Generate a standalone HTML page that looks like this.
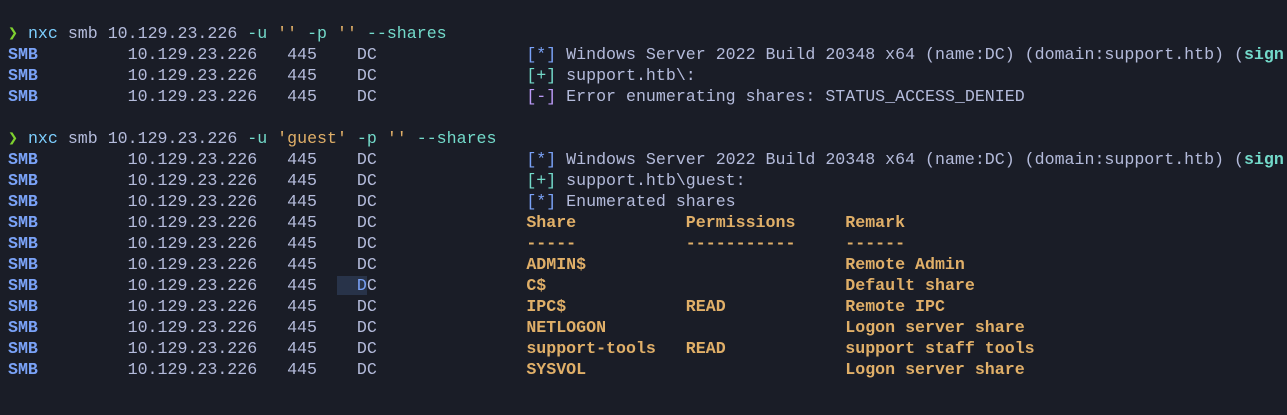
<!DOCTYPE html>
<html><head><meta charset="utf-8"><style>
html,body{margin:0;padding:0;background:#1a1d27;width:1287px;height:415px;overflow:hidden}
pre{position:absolute;left:8px;top:23px;margin:0;font-family:"Liberation Mono","DejaVu Sans Mono",monospace;font-size:16.63px;line-height:21px;color:#b4bbdb;white-space:pre}
.s{color:#7aa2f7;font-weight:bold}
.g{color:#7fd12f;font-weight:bold}
.c{color:#7dcfff}
.f{color:#73daca}
.o{color:#e0af68}
.y{color:#e0af68;font-weight:bold}
.b{color:#7aa2f7}
.t{color:#73daca}
.p{color:#bb9af7}
.tb{color:#73daca;font-weight:bold}
.hl{background:#283349;color:#7aa2f7}
</style></head><body><pre><span class="g">❯</span> <span class="c">nxc</span> smb 10.129.23.226 <span class="f">-u</span> <span class="o">''</span> <span class="f">-p</span> <span class="o">''</span> <span class="f">--shares</span>
<span class="s">SMB</span>         10.129.23.226   445    DC               <span class="b">[*]</span> Windows Server 2022 Build 20348 x64 (name:DC) (domain:support.htb) (<span class="tb">sign</span>
<span class="s">SMB</span>         10.129.23.226   445    DC               <span class="t">[+]</span> support.htb\:
<span class="s">SMB</span>         10.129.23.226   445    DC               <span class="p">[-]</span> Error enumerating shares: STATUS_ACCESS_DENIED

<span class="g">❯</span> <span class="c">nxc</span> smb 10.129.23.226 <span class="f">-u</span> <span class="o">'guest'</span> <span class="f">-p</span> <span class="o">''</span> <span class="f">--shares</span>
<span class="s">SMB</span>         10.129.23.226   445    DC               <span class="b">[*]</span> Windows Server 2022 Build 20348 x64 (name:DC) (domain:support.htb) (<span class="tb">sign</span>
<span class="s">SMB</span>         10.129.23.226   445    DC               <span class="t">[+]</span> support.htb\guest:
<span class="s">SMB</span>         10.129.23.226   445    DC               <span class="b">[*]</span> Enumerated shares
<span class="s">SMB</span>         10.129.23.226   445    DC               <span class="y">Share           Permissions     Remark</span>
<span class="s">SMB</span>         10.129.23.226   445    DC               <span class="y">-----           -----------     ------</span>
<span class="s">SMB</span>         10.129.23.226   445    DC               <span class="y">ADMIN$                          Remote Admin</span>
<span class="s">SMB</span>         10.129.23.226   445  <span class="hl">  D</span>C               <span class="y">C$                              Default share</span>
<span class="s">SMB</span>         10.129.23.226   445    DC               <span class="y">IPC$            READ            Remote IPC</span>
<span class="s">SMB</span>         10.129.23.226   445    DC               <span class="y">NETLOGON                        Logon server share</span>
<span class="s">SMB</span>         10.129.23.226   445    DC               <span class="y">support-tools   READ            support staff tools</span>
<span class="s">SMB</span>         10.129.23.226   445    DC               <span class="y">SYSVOL                          Logon server share</span></pre></body></html>
